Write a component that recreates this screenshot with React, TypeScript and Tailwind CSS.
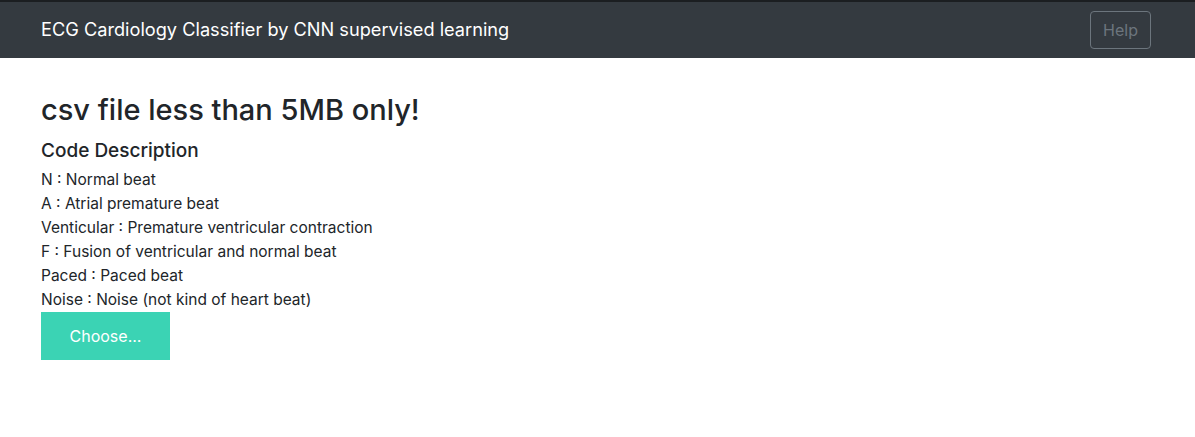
export default function App() {
  const codes = [
    'N : Normal beat',
    'A : Atrial premature beat',
    'Venticular : Premature ventricular contraction',
    'F : Fusion of ventricular and normal beat',
    'Paced : Paced beat',
    'Noise : Noise (not kind of heart beat)',
  ]

  return (
    <div className="min-h-[437px] bg-white text-[#212529] font-['Inter',sans-serif]">
      <nav className="h-[58px] bg-[#343a40] border-t-2 border-[#1b1e21] flex items-center justify-between px-[41px]">
        <span className="text-white text-[18.2px]">ECG Cardiology Classifier by CNN supervised learning</span>
        <button className="h-[38px] px-[12px] mr-[3px] border border-[#6c757d] rounded-[4px] text-[#6c757d] text-[16px]">
          Help
        </button>
      </nav>
      <main className="px-[41px] pt-[35px]">
        <h2 className="text-[29px] font-medium leading-[1.2] mb-[12px]">csv file less than 5MB only!</h2>
        <h5 className="text-[19px] font-medium leading-[1.2] mb-[5px]">Code Description</h5>
        <div className="text-[15.5px] leading-[24px]">
          {codes.map((c) => (
            <div key={c}>{c}</div>
          ))}
        </div>
        <button className="w-[129px] h-[48px] bg-[#3bd3b4] text-white text-[16px]">Choose...</button>
      </main>
    </div>
  )
}
